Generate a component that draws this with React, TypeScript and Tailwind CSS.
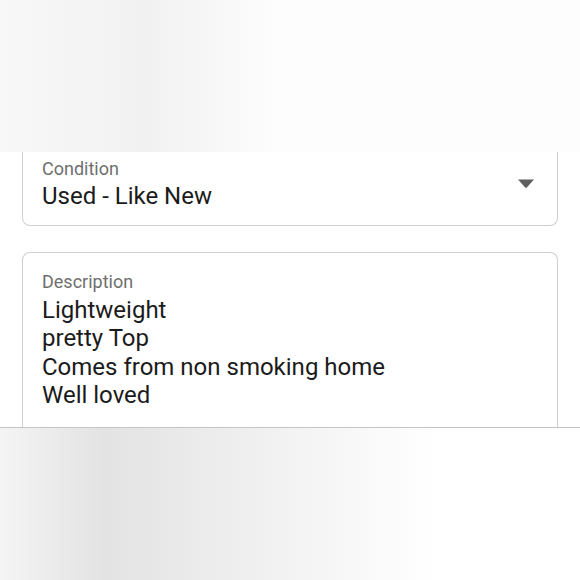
const App = () => {
  return (
    <div className="w-[580px] h-[580px] flex flex-col overflow-hidden bg-white font-['Roboto',sans-serif]">
      {/* Blurred backdrop above the sheet */}
      <div className="h-[152px] shrink-0 bg-linear-to-r from-[#f8f8f8] via-[#f1f1f1] via-25% to-[#fdfdfd] to-48%" />

      {/* Form strip */}
      <div className="h-[275px] shrink-0 bg-white px-[22px] overflow-hidden">
        {/* Condition select, top edge cut off */}
        <div className="relative h-[74px] rounded-b-lg border-x border-b border-[#cfcfcf] pl-[19px] pr-4 pt-[6px]">
          <div className="text-[18px] leading-[21px] text-[#6f6f6f]">Condition</div>
          <div className="mt-[3px] text-[24px] leading-[28px] text-[#1b1b1b]">Used - Like New</div>
          <svg
            className="absolute right-[22px] top-[26px]"
            width="18"
            height="11"
            viewBox="0 0 18 11"
            aria-hidden
          >
            <path d="M1 1.5 H17 L9.8 9.6 Q9 10.4 8.2 9.6 Z" fill="#5f5f5f" />
          </svg>
        </div>

        {/* Description textarea */}
        <div className="mt-[26px] h-[200px] rounded-t-lg border-x border-t border-[#cfcfcf] pl-[19px] pr-4 pt-[18px]">
          <div className="text-[18px] leading-[21px] text-[#6f6f6f]">Description</div>
          <div className="mt-[4px] text-[24px] leading-[28.3px] text-[#1b1b1b]">
            <div>Lightweight</div>
            <div>pretty Top</div>
            <div>Comes from non smoking home</div>
            <div>Well loved</div>
          </div>
        </div>
      </div>

      {/* Blurred backdrop below the sheet */}
      <div className="flex-1 border-t border-[#c4c4c4] bg-linear-to-r from-[#f4f4f4] via-[#e3e3e3] via-18% to-white to-75%" />
    </div>
  );
};

export default App;
